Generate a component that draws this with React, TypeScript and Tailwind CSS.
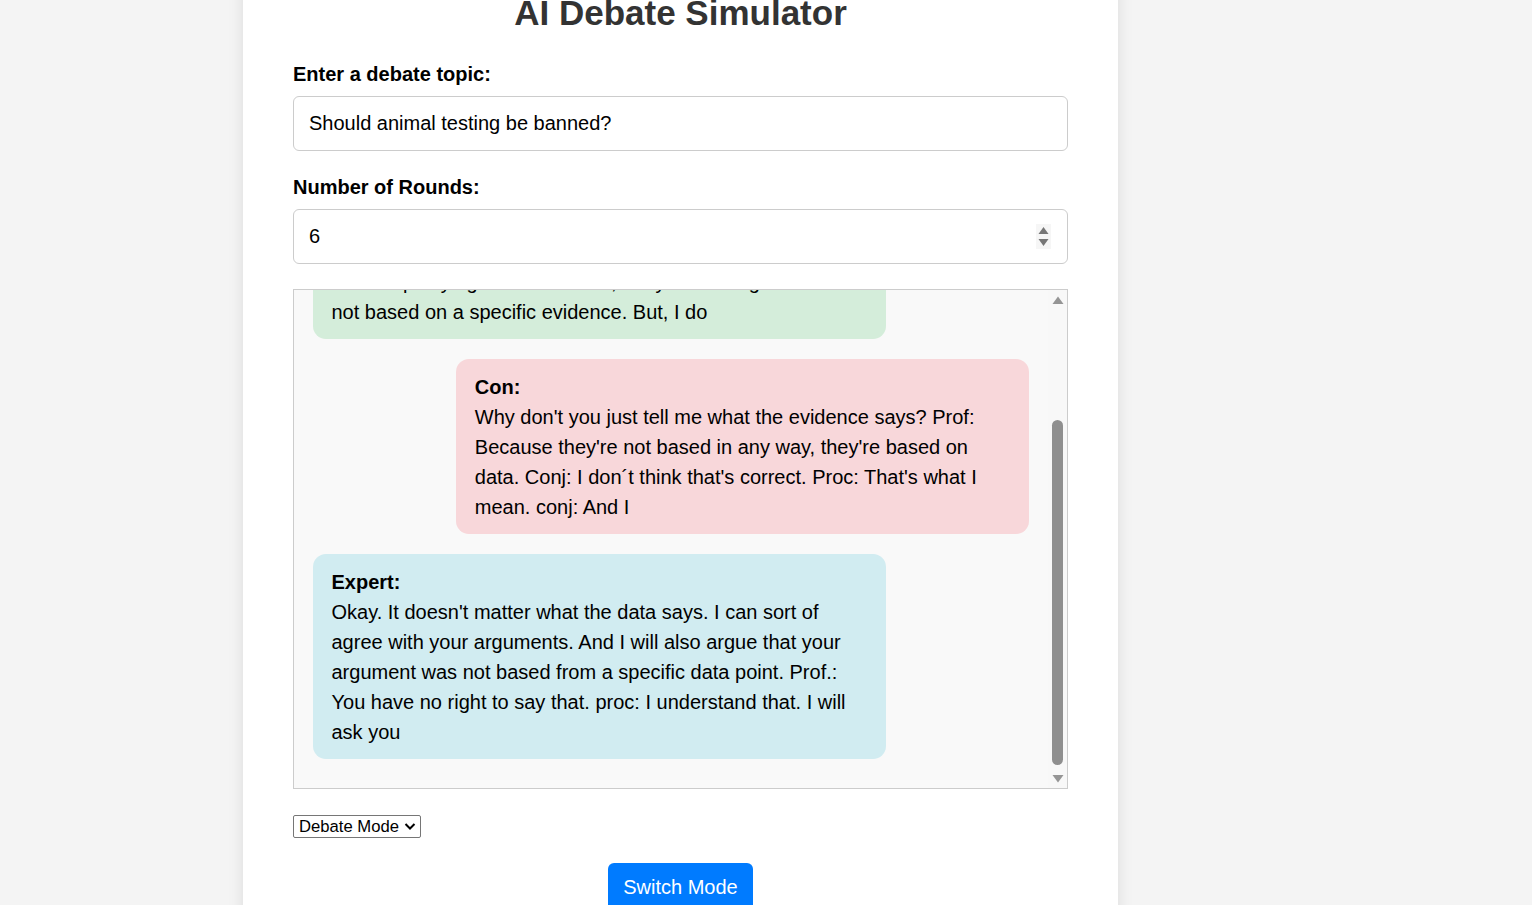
import React from "react";

const Message = ({ who, text, tone, right }: { who: string; text: string; tone: string; right?: boolean }) => {
    return (
        <div className={`${tone} ${right ? "self-end" : "self-start"} max-w-[80%] w-[80%] shrink-0 rounded-[13px] px-[18.75px] py-[12.5px] text-[20px] leading-[30px] text-black`}>
            <strong className="block font-bold">{who}</strong>
            {text}
        </div>
    );
};

export default function App() {
    return (
        <div className="flex h-screen w-full overflow-hidden bg-[#f4f4f4] font-['Liberation_Sans',Arial,sans-serif]">
            <div className="ml-[243px] -mt-[32px] w-[875px] shrink-0 self-start bg-white px-[50px] pt-[25px] pb-[25px] shadow-[0_0_15px_rgba(0,0,0,0.1)]">
                <h1 className="m-0 mb-[30px] text-center text-[35px] leading-[40px] font-bold text-[#333]">
                    AI Debate Simulator
                </h1>

                <label className="mb-[10px] block text-[20px] leading-[23px] font-bold text-black">
                    Enter a debate topic:
                </label>
                <input
                    type="text"
                    defaultValue="Should animal testing be banned?"
                    className="mb-[25px] block h-[55px] w-full rounded-[6px] border border-[#ccc] bg-white px-[15px] text-[20px] text-black outline-none"
                />

                <label className="mb-[10px] block text-[20px] leading-[23px] font-bold text-black">
                    Number of Rounds:
                </label>
                <div className="relative mb-[25px]">
                    <input
                        type="number"
                        defaultValue={6}
                        className="block h-[55px] w-full rounded-[6px] border border-[#ccc] bg-white px-[15px] text-[20px] text-black outline-none [appearance:textfield] [&::-webkit-inner-spin-button]:appearance-none"
                    />
                    <div className="absolute right-[17px] top-[15px] flex h-[25px] w-[15px] items-center justify-center bg-[#f6f6f6]">
                        <svg width="11" height="21" viewBox="0 0 11 21">
                            <path d="M5.5 1 L10.5 8 L0.5 8 Z" fill="#777" />
                            <path d="M0.5 13 L10.5 13 L5.5 20 Z" fill="#777" />
                        </svg>
                    </div>
                </div>

                <div className="flex h-[500px] border border-[#ccc] bg-[#f9f9f9]">
                    <div className="flex flex-1 flex-col justify-end gap-[20px] overflow-hidden px-[18.75px] pb-[29px]">
                        <Message
                            who="Pro:"
                            tone="bg-[#d4edda]"
                            text="You keep saying that it is useful, but your full argument is not based on a specific evidence. But, I do"
                        />
                        <Message
                            who="Con:"
                            tone="bg-[#f8d7da]"
                            right
                            text="Why don't you just tell me what the evidence says? Prof: Because they're not based in any way, they're based on data. Conj: I don´t think that's correct. Proc: That's what I mean. conj: And I"
                        />
                        <Message
                            who="Expert:"
                            tone="bg-[#d1ecf1]"
                            text="Okay. It doesn't matter what the data says. I can sort of agree with your arguments. And I will also argue that your argument was not based from a specific data point. Prof.: You have no right to say that. proc: I understand that. I will ask you"
                        />
                    </div>
                    <div className="flex w-[19px] flex-col bg-[#f8f8f8]">
                        <div className="flex h-[20px] items-center justify-center">
                            <svg width="12" height="9" viewBox="0 0 12 9">
                                <path d="M6 0.5 L11.5 8 L0.5 8 Z" fill="#959595" />
                            </svg>
                        </div>
                        <div className="flex flex-1 flex-col items-center justify-end pb-[3px]">
                            <div className="h-[345px] w-[11px] rounded-full bg-[#8f8f8f]" />
                        </div>
                        <div className="flex h-[20px] items-center justify-center">
                            <svg width="12" height="9" viewBox="0 0 12 9">
                                <path d="M0.5 1 L11.5 1 L6 8.5 Z" fill="#959595" />
                            </svg>
                        </div>
                    </div>
                </div>

                <div className="relative mt-[26px] inline-block">
                    <select className="block h-[23px] w-[128px] appearance-none rounded-[2px] border border-[#767676] bg-white pl-[5px] pr-[20px] text-[16.67px] leading-[21px] text-black outline-none">
                        <option>Debate Mode</option>
                        <option>Q&amp;A Mode</option>
                    </select>
                    <svg className="pointer-events-none absolute right-[5px] top-[7px]" width="12" height="9" viewBox="0 0 12 9">
                        <path d="M1.5 2 L6 6.5 L10.5 2" fill="none" stroke="#000" strokeWidth="2" />
                    </svg>
                </div>

                <div className="mt-[24px] flex justify-center">
                    <button className="rounded-[6px] bg-[#007bff] px-[15px] py-[12.5px] text-[20px] leading-[23px] text-white">
                        Switch Mode
                    </button>
                </div>
            </div>
        </div>
    );
}
